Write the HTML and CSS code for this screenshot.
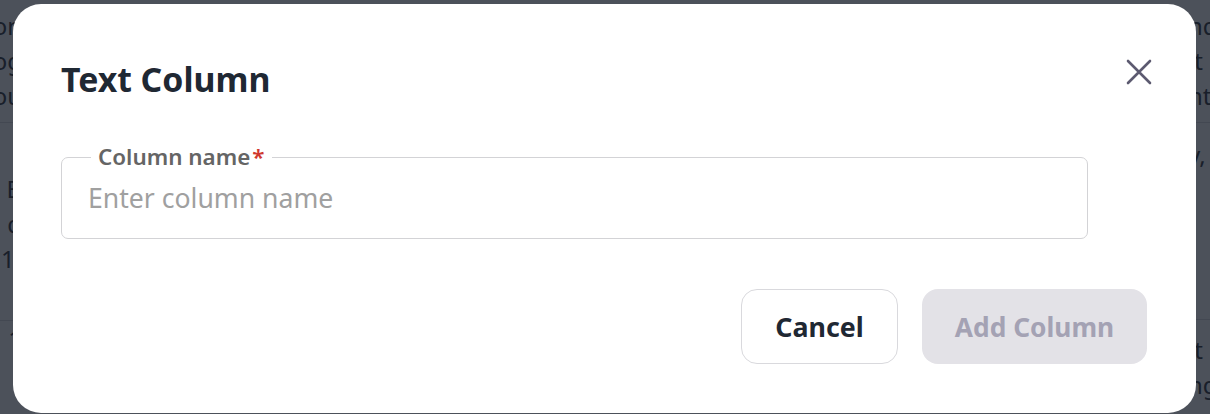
FILE: index.html
```html
<!DOCTYPE html>
<html lang="en">
<head>
<meta charset="utf-8">
<title>Text Column</title>
<link rel="stylesheet" href="styles.css">
</head>
<body>
<div class="page">
  <div class="col left">
    <div class="line">tion</div>
    <div class="line">log</div>
    <div class="line">ou</div>
    <div class="sep"></div>
    <div class="line gap">B</div>
    <div class="line">d</div>
    <div class="line">1(</div>
    <div class="sep low"></div>
    <div class="line">1</div>
  </div>
  <div class="col right">
    <div class="line">nd</div>
    <div class="line">it</div>
    <div class="line">nt</div>
    <div class="sep"></div>
    <div class="line">y,</div>
    <div class="sep lower"></div>
    <div class="line">it</div>
    <div class="line">ng</div>
  </div>
</div>
<div class="overlay">
  <div class="modal">
    <div class="header">
      <h2 class="title">Text Column</h2>
      <button class="close" aria-label="Close">
        <svg width="28" height="28" viewBox="0 0 28 28" fill="none" stroke="#5c5a70" stroke-width="2.6" stroke-linecap="round"><path d="M3 3L25 25M25 3L3 25"/></svg>
      </button>
    </div>
    <fieldset class="field">
      <legend class="legend">Column name<span class="req">*</span></legend>
      <input class="input" type="text" placeholder="Enter column name">
    </fieldset>
    <div class="actions">
      <button class="btn cancel">Cancel</button>
      <button class="btn add" disabled>Add Column</button>
    </div>
  </div>
</div>
</body>
</html>
```
FILE: styles.css
```css
* { box-sizing: border-box; }
html, body { margin: 0; padding: 0; }
body {
  width: 1210px;
  height: 414px;
  overflow: hidden;
  background: #ffffff;
  font-family: "Noto Sans", "Open Sans", sans-serif;
}
.page {
  display: flex;
  justify-content: space-between;
  padding-top: 8px;
  color: #2b2f36;
  font-size: 24px;
}
.col { overflow: hidden; }
.col.left { width: 22px; display: flex; flex-direction: column; align-items: flex-end; }
.col.right { width: 22px; }
.line {
  height: 35px;
  line-height: 35px;
  white-space: nowrap;
}
.col.left .line { align-self: flex-end; }
.line.gap { margin-top: 48px; }
.sep { height: 1px; background: #d7d8dc; margin: 9px 0 0; width: 200px; }
.sep.low { margin-top: 44px; width: 200px; }
.sep.lower { margin-top: 147px; }
.right .sep { margin-bottom: 14px; }
.right .sep.lower { margin-bottom: 12px; }
.overlay {
  position: fixed;
  inset: 0;
  background: rgba(20, 26, 38, 0.76);
  padding: 4px 14px 0 13px;
}
.modal {
  background: #ffffff;
  border-radius: 28px;
  height: 409px;
  padding: 46px 49px 0 48px;
  display: flex;
  flex-direction: column;
}
.header {
  display: flex;
  justify-content: space-between;
  align-items: flex-start;
  height: 52px;
}
.title {
  margin: 3px 0 0;
  font-size: 33.8px;
  line-height: 52px;
  font-weight: 700;
  color: #1f2833;
}
.close {
  background: none;
  border: none;
  padding: 0;
  margin-top: 8px;
  margin-right: -6px;
  width: 28px;
  height: 28px;
  display: flex;
}
.field {
  margin: 43px 0 0;
  width: 1027px;
  border: 1.5px solid #d3d3d6;
  border-radius: 7px;
  padding: 0 26px 0 26px;
  height: 94px;
}
.legend {
  padding: 0 7px;
  margin-left: 3px;
  font-size: 22.4px;
  font-weight: 600;
  color: #656565;
  line-height: 24px;
}
.req { color: #d0382e; margin-left: 2px; }
.input {
  border: none;
  outline: none;
  width: 100%;
  font-family: inherit;
  font-size: 26.6px;
  padding: 0;
  margin-top: 11px;
  color: #333;
  background: transparent;
}
.input::placeholder { color: #a0a0a0; }
.actions {
  display: flex;
  justify-content: flex-end;
  gap: 24px;
  margin-top: 50px;
}
.btn {
  font-family: inherit;
  font-weight: 700;
  height: 75px;
  border-radius: 16px;
  cursor: pointer;
}
.cancel {
  width: 157px;
  font-size: 26.8px;
  background: #ffffff;
  border: 1.5px solid #d9d9dd;
  color: #1f2833;
}
.add {
  width: 225px;
  font-size: 26.3px;
  background: #e3e2e7;
  border: none;
  color: #a4a2b4;
}
```
